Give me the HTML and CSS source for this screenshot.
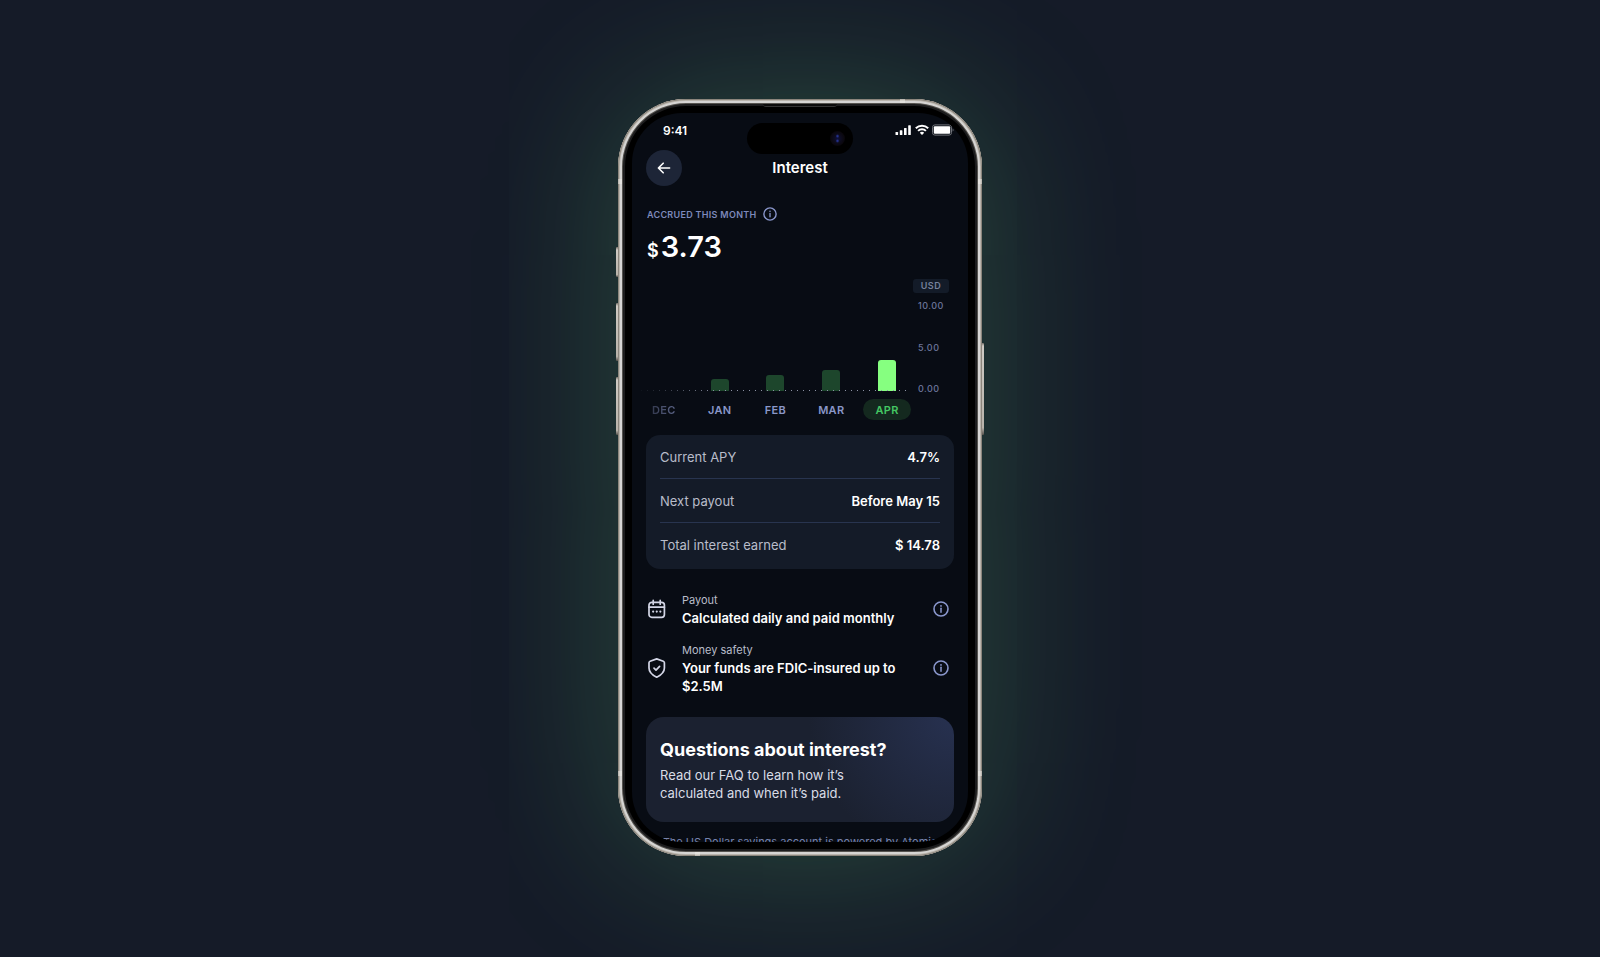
FILE: index.html
```
<!DOCTYPE html>
<html lang="en">
<head>
    <meta charset="UTF-8">
    <meta name="viewport" content="width=device-width, initial-scale=1.0">
    <title>Interest</title>
    <link rel="stylesheet" href="styles.css">
</head>
<body>

<svg class="sprite" aria-hidden="true">
    <symbol id="icon-info" viewBox="0 0 16 16">
        <circle cx="8" cy="8" r="7" fill="none" stroke="currentColor" stroke-width="1.6"/>
        <path d="M8 7.3v3.9" stroke="currentColor" stroke-width="1.5" stroke-linecap="round"/>
        <circle cx="8" cy="4.9" r=".9" fill="currentColor"/>
    </symbol>
</svg>

<div class="phone">
    <span class="side-button action"></span>
    <span class="side-button volume-up"></span>
    <span class="side-button volume-down"></span>
    <span class="side-button power"></span>
    <span class="antenna antenna-top"></span>
    <span class="antenna antenna-bottom"></span>
    <span class="antenna antenna-left-high"></span>
    <span class="antenna antenna-right-high"></span>
    <span class="antenna antenna-left-low"></span>
    <span class="antenna antenna-right-low"></span>
    <span class="speaker"></span>

    <main class="screen">
        <div class="island"><span class="camera"></span></div>

        <div class="status-bar">
            <time>9:41</time>
            <div class="status-icons">
                <svg width="17" height="12" viewBox="0 0 17 12" fill="#fff">
                    <rect x="0.5" y="8" width="2.6" height="3" rx=".6"/>
                    <rect x="4.8" y="6.2" width="2.6" height="4.8" rx=".6"/>
                    <rect x="9" y="4" width="2.6" height="7" rx=".6"/>
                    <rect x="13.2" y="1.2" width="2.6" height="9.8" rx=".6"/>
                </svg>
                <svg width="14" height="12" viewBox="0 0 14 12" fill="none" stroke="#fff" stroke-width="2">
                    <path d="M.8 4.2a8.9 8.9 0 0 1 12.4 0"/>
                    <path d="M3.1 6.9a5.5 5.5 0 0 1 7.8 0"/>
                    <path d="M7 11 4.8 8.8a3.1 3.1 0 0 1 4.4 0z" fill="#fff" stroke="none"/>
                </svg>
                <svg width="22" height="12" viewBox="0 0 22 12">
                    <rect x=".5" y=".9" width="19" height="10.2" rx="2.4" fill="none" stroke="#6f7278"/>
                    <rect x="1.8" y="2.2" width="16.4" height="7.6" rx="1" fill="#fff"/>
                    <path d="M20.6 4.4v3.2q1-.5 1-1.6t-1-1.6z" fill="#6f7278"/>
                </svg>
            </div>
        </div>

        <header class="top-bar">
            <button class="back" type="button" aria-label="Back">
                <svg width="14" height="14" viewBox="0 0 14 14" fill="none" stroke="#fff" stroke-width="1.6" stroke-linecap="round" stroke-linejoin="round">
                    <path d="M12.6 7H1.6M6.2 2.2 1.4 7l4.8 4.8"/>
                </svg>
            </button>
            <h1>Interest</h1>
        </header>

        <section class="accrued">
            <div class="accrued-label">
                <h2>ACCRUED THIS MONTH</h2>
                <button class="info" type="button" aria-label="About accrued interest">
                    <svg width="14" height="14"><use href="#icon-info"/></svg>
                </button>
            </div>
            <p class="amount"><span>$</span>3.73</p>
        </section>

        <section class="chart">
            <div class="plot">
                <div class="bars">
                    <div class="bar" style="height: 0px"></div>
                    <div class="bar" style="height: 12px"></div>
                    <div class="bar" style="height: 16px"></div>
                    <div class="bar" style="height: 21px"></div>
                    <div class="bar current" style="height: 31px"></div>
                </div>
                <div class="months">
                    <button type="button" class="faded">DEC</button>
                    <button type="button">JAN</button>
                    <button type="button">FEB</button>
                    <button type="button">MAR</button>
                    <button type="button" class="selected">APR</button>
                </div>
            </div>
            <div class="axis">
                <span class="unit">USD</span>
                <div class="ticks">
                    <span>10.00</span>
                    <span>5.00</span>
                    <span>0.00</span>
                </div>
            </div>
        </section>

        <dl class="summary">
            <div class="summary-row"><dt>Current APY</dt><dd>4.7%</dd></div>
            <div class="summary-row"><dt>Next payout</dt><dd>Before May 15</dd></div>
            <div class="summary-row"><dt>Total interest earned</dt><dd>$ 14.78</dd></div>
        </dl>

        <ul class="facts">
            <li>
                <svg class="fact-icon" width="20" height="20" viewBox="0 0 20 20" fill="none" stroke="currentColor" stroke-width="1.7" stroke-linecap="round" stroke-linejoin="round">
                    <rect x="2" y="3.3" width="15.4" height="15" rx="2.8"/>
                    <path d="M2 8.2h15.4M6.2 1.4v3.8M13.2 1.4v3.8"/>
                    <path d="M6.1 12.6h.1M9.7 12.6h.1M13.3 12.6h.1" stroke-width="2.1"/>
                </svg>
                <div class="fact-text">
                    <p>Payout</p>
                    <strong>Calculated daily and paid monthly</strong>
                </div>
                <button class="info" type="button" aria-label="About payout">
                    <svg width="16" height="16"><use href="#icon-info"/></svg>
                </button>
            </li>
            <li>
                <svg class="fact-icon" width="20" height="20" viewBox="0 0 20 20" fill="none" stroke="currentColor" stroke-width="1.7" stroke-linecap="round" stroke-linejoin="round">
                    <path d="M9.7.9 16.3 3.2q1.1.4 1.1 1.6v5.1c0 4.2-3.2 7-7.7 9.3C5.2 16.9 2 14.1 2 9.9V4.8Q2 3.6 3.1 3.2z"/>
                    <path d="m7 10.2 2 2 3.6-3.8"/>
                </svg>
                <div class="fact-text">
                    <p>Money safety</p>
                    <strong>Your funds are FDIC-insured up to $2.5M</strong>
                </div>
                <button class="info" type="button" aria-label="About money safety">
                    <svg width="16" height="16"><use href="#icon-info"/></svg>
                </button>
            </li>
        </ul>

        <a class="faq" href="#">
            <h2>Questions about interest?</h2>
            <p>Read our FAQ to learn how it’s<br>calculated and when it’s paid.</p>
        </a>

        <p class="footnote">The US Dollar savings account is powered by Atomic</p>
    </main>
</div>

</body>
</html>
```

FILE: styles.css
```
* {
    box-sizing: border-box;
}

body {
    display: flex;
    justify-content: center;
    align-items: center;
    min-height: 100vh;
    margin: 0;
    padding-bottom: 2px;
    background-color: #151b28;
    font-family: Inter, "Liberation Sans", sans-serif;
    color: #ffffff;
}

h1, h2, p, dl, dd, ul {
    margin: 0;
    padding: 0;
}

button {
    padding: 0;
    border: none;
    background: none;
    font-family: inherit;
    color: inherit;
    cursor: pointer;
}

svg {
    display: block;
    overflow: visible;
}

.sprite {
    position: absolute;
    width: 0;
    height: 0;
}

/* Phone body */
.phone {
    position: relative;
    width: 364px;
    max-width: 100%;
    aspect-ratio: 364 / 757;
    padding: 14px;
    border-radius: 68px;
    background-color: #000000;
    box-shadow:
        inset 0 0 0 1px #8b857c,
        inset 0 0 0 2px #b9b4ac,
        inset 0 0 0 4px #d6d5d3,
        inset 0 0 0 5px #55534f,
        inset 0 0 0 7px #1c1c1d,
        0 0 160px rgba(120, 255, 140, 0.22);
}

.side-button {
    position: absolute;
    left: -2px;
    width: 2px;
    border-radius: 1px 0 0 1px;
    background: linear-gradient(#77716a, #cfcac3 3px, #b9b3aa 92%, #55514c);
}

.action {
    top: 148px;
    height: 30px;
}

.volume-up {
    top: 204px;
    height: 58px;
}

.volume-down {
    top: 278px;
    height: 58px;
}

.power {
    top: 244px;
    left: auto;
    right: -2px;
    height: 92px;
    border-radius: 0 1px 1px 0;
}

.antenna {
    position: absolute;
    width: 5px;
    height: 5px;
    background-color: rgba(240, 238, 232, 0.5);
}

.antenna-top { top: 0; left: 282px; height: 4px; }
.antenna-bottom { bottom: 0; left: 77px; height: 4px; }
.antenna-left-high { top: 80px; left: 0; width: 4px; }
.antenna-right-high { top: 80px; right: 0; width: 4px; }
.antenna-left-low { bottom: 80px; left: 0; width: 4px; }
.antenna-right-low { bottom: 80px; right: 0; width: 4px; }

.speaker {
    position: absolute;
    top: 5px;
    left: 50%;
    width: 74px;
    height: 3px;
    margin-left: -37px;
    border-radius: 0 0 3px 3px;
    border-bottom: 1px solid #333333;
    background-color: #0b0b0b;
}

.screen {
    position: relative;
    height: 100%;
    padding: 0 14px;
    border-radius: 50px;
    background-color: #080c14;
    overflow: hidden;
}

.island {
    position: absolute;
    top: 10px;
    left: 50%;
    display: flex;
    justify-content: flex-end;
    align-items: center;
    width: 106px;
    height: 31px;
    margin-left: -53px;
    padding-right: 8px;
    border-radius: 16px;
    background-color: #000000;
}

.camera {
    width: 15px;
    height: 15px;
    border-radius: 50%;
    background:
        radial-gradient(circle at 50% 34%, #2a3aa8 0, rgba(42, 58, 168, 0) 2px),
        radial-gradient(circle at 50% 66%, #2a3aa8 0, rgba(42, 58, 168, 0) 2px),
        radial-gradient(circle, #0d0f3c 0, #0c0b1c 4px, #0a070c 7px);
}

/* Status bar */
.status-bar {
    display: flex;
    justify-content: space-between;
    align-items: center;
    height: 34px;
    margin-bottom: 3px;
    padding-left: 17px;
    font-size: 12px;
    font-weight: 600;
}

.status-icons {
    display: flex;
    gap: 3px;
}

/* Title */
.top-bar {
    display: grid;
    grid-template-columns: 36px 1fr 36px;
    align-items: center;
}

.back {
    display: flex;
    justify-content: center;
    align-items: center;
    height: 36px;
    border-radius: 50%;
    background-color: #1d2537;
}

.top-bar h1 {
    font-size: 15px;
    font-weight: 600;
    line-height: 20px;
    text-align: center;
}

.info {
    color: #8a97cc;
}

.accrued {
    margin-top: 20px;
}

.accrued-label {
    display: flex;
    align-items: center;
    gap: 6px;
    height: 16px;
    padding-left: 1px;
}

.accrued-label h2 {
    font-size: 9px;
    font-weight: 600;
    letter-spacing: 0.3px;
    color: #7d89bb;
}

.amount {
    margin-top: 7px;
    padding-left: 1px;
    font-size: 29px;
    font-weight: 600;
    line-height: 36px;
}

.amount span {
    margin-right: 2px;
    font-size: 18px;
    line-height: 18px;
}

/* Monthly chart */
.chart {
    display: flex;
    margin: 14px 5px 0 -10px;
}

.plot {
    flex: 1;
    margin-right: -2px;
}

.bars {
    position: relative;
    display: grid;
    grid-template-columns: repeat(5, 1fr);
    align-items: end;
    justify-items: center;
    height: 112px;
}

.bars::after {
    content: "";
    position: absolute;
    left: 0;
    right: 4px;
    bottom: 0;
    height: 1px;
    background: repeating-linear-gradient(90deg, transparent 0 5px, #8d93a5 5px 6px);
    mask-image: linear-gradient(90deg, transparent, #000000 30%);
}

.bar {
    width: 18px;
    border-radius: 3px 3px 0 0;
    background-color: #1d462c;
}

.bar.current {
    background-color: #86ff80;
}

.months {
    display: grid;
    grid-template-columns: repeat(5, 1fr);
    justify-items: center;
    margin-top: 8px;
}

.months button {
    width: 48px;
    height: 21px;
    border-radius: 11px;
    font-size: 11px;
    font-weight: 600;
    letter-spacing: 0.3px;
    color: #8a97c8;
}

.months .faded {
    background: linear-gradient(90deg, #343a50 25%, #626b90 80%);
    background-clip: text;
    color: transparent;
}

.months .selected {
    background-color: #14291f;
    color: #44c763;
}

.axis {
    width: 36px;
    font-size: 9px;
    font-weight: 500;
    line-height: 12px;
    letter-spacing: 0.5px;
    color: #6c769c;
}

.unit {
    display: block;
    margin-bottom: 7px;
    border-radius: 3px;
    background-color: #131b28;
    font-weight: 600;
    line-height: 14px;
    text-align: center;
    color: #76819c;
}

.ticks {
    display: flex;
    flex-direction: column;
    justify-content: space-between;
    height: 95px;
    padding-left: 5px;
}

/* Summary card */
.summary {
    margin-top: 15px;
    padding: 0 14px 2px;
    border-radius: 14px;
    background-color: #141b28;
}

.summary-row {
    display: flex;
    justify-content: space-between;
    align-items: center;
    height: 44px;
    font-size: 13px;
    border-bottom: 1px solid #28344f;
}

.summary-row:last-child {
    border-bottom: none;
}

.summary dt {
    color: #b9bdca;
}

.summary dd {
    font-weight: 600;
}

/* Payout and safety */
.facts {
    display: flex;
    flex-direction: column;
    gap: 14px;
    margin-top: 22px;
    list-style: none;
}

.facts li {
    display: flex;
    align-items: center;
    padding: 0 5px 0 1px;
}

.fact-icon {
    color: #d3d6e6;
}

.fact-text {
    flex: 1;
    margin: 0 32px 0 15px;
    font-size: 13px;
    line-height: 18px;
}

.fact-text p {
    font-size: 11px;
    line-height: 18px;
    color: #b9bdca;
}

.fact-text strong {
    display: block;
    font-weight: 600;
}

/* FAQ link */
.faq {
    display: block;
    margin-top: 22px;
    padding: 21px 14px 20px;
    border-radius: 18px;
    background: radial-gradient(circle at 100% 0, #273150, #1b2130 145px);
    color: inherit;
    text-decoration: none;
}

.faq h2 {
    font-size: 18px;
    font-weight: 700;
    line-height: 24px;
}

.faq p {
    margin-top: 4px;
    font-size: 13px;
    line-height: 18px;
    color: #d9dce6;
}

.footnote {
    margin-top: 12px;
    font-size: 11px;
    line-height: 16px;
    text-align: center;
    white-space: nowrap;
    color: #7683ad;
}
```
